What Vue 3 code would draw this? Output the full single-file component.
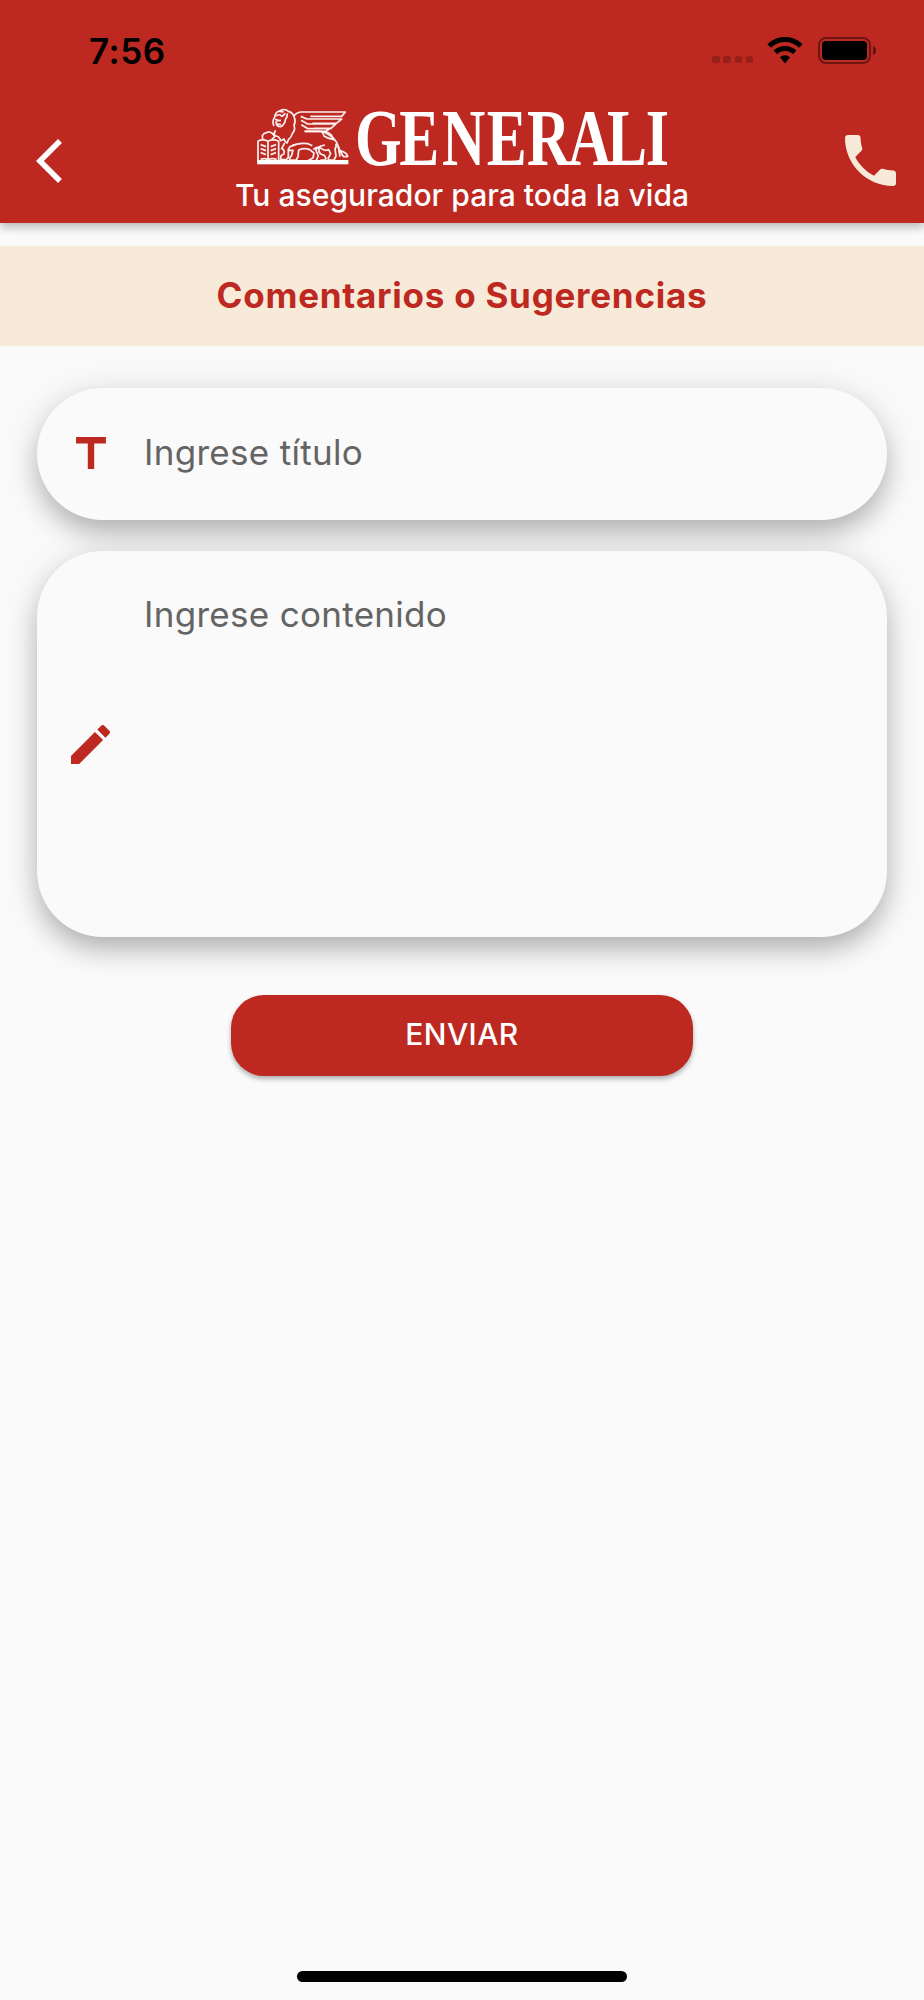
<template>
  <div class="screen">
    <header class="app-header">
      <div class="status-bar">
        <span class="time">7:56</span>
        <div class="status-icons">
          <div class="signal">
            <i v-for="n in 4" :key="n"></i>
          </div>
          <svg class="wifi" viewBox="0 0 36 27">
            <path d="M.4 7.2a25 25 0 0 1 35.2 0L32 10.8a20 20 0 0 0-28 0z" />
            <path d="M6.6 13.6a16.4 16.4 0 0 1 22.8 0l-3.5 3.7a11.4 11.4 0 0 0-15.8 0z" />
            <path d="M13 20.2a7.4 7.4 0 0 1 10 0l-5 6.4z" />
          </svg>
          <svg class="battery" viewBox="0 0 59 28">
            <rect x="1" y="1" width="51" height="25" rx="7" fill="none" stroke="#000" stroke-opacity=".42" stroke-width="2" />
            <rect x="4" y="4" width="45" height="19" rx="4" />
            <path d="M55 9q3 1 3 4.500t-3 4.500z" fill-opacity=".5" />
          </svg>
        </div>
      </div>

      <div class="nav-bar">
        <button class="nav-btn back" aria-label="Volver">
          <svg viewBox="0 0 11.67 19.8">
            <path d="M11.67 1.77L9.9 0 0 9.900l9.900 9.900 1.770-1.770L3.540 9.900z" />
          </svg>
        </button>

        <div class="brand">
          <svg class="logo" viewBox="256 106 414 62">
            <g transform="translate(251 100) scale(.3333)">
              <g class="lion">
                <!-- book -->
                <path d="M24 188V124q14-8 30 0q16-8 32 0V180" />
                <path d="M54 126V176M32 178q12-5 22 1q12-6 26-1" />
                <path d="M32 134l16 6M32 146l16 6M32 158l16 6M78 134l-16 6M78 146l-16 6M78 158l-16 6" />
                <path d="M38 118l-1-11q4-8 13-9q8-5 16 2q8 2 8 10l-8 8" />
                <!-- head and mane -->
                <path d="M72 78q-7-14 2-26q1-15 14-19q17-8 27 1q14 3 18 18q5 12-1 24q5 14-5 25q-3 12-11 17l-5 11q-7-3-9-12l-10 5q-4-13-14-14l-9-5q8-5 6-12" />
                <path d="M79 48q9-8 16 1q7-3 11-9M75 58l8 2-5 7 3 9q10 8 17 0q8-7 8-17q7-9 6-19" />
                <path d="M81 72l12 2M84 62l9-1M88 34l13 2" />
                <!-- wing -->
                <path d="M132 47q8-10 20-11h134l-11 13H181" />
                <path d="M152 49l19 8h104l-16 13H187M153 61l20 11h84l-14 13h-51M154 74l20 12h65l-12 8h-64" />
                <path d="M165 94h48q20 4 35 19q16 13 18 35l4 22" />
                <path d="M216 96q16-3 28 9l7 14q-18-3-29-11q-3-9-6-12z" />
                <!-- tail -->
                <path d="M265 140q8 22 16 30h13M269 151q12 3 20 10l5 10" />
                <!-- legs -->
                <path d="M104 129l-9 17q10 3 7 15l-9 6-1 12h17l6-7V155q-2-8 5-15l12-6" />
                <path d="M116 151h13l-4 15-6 9v5h20l5-10 2-20q17-7 33-1l13 10-3 15-12 6v5h20l8-17-8-20q14-12 28-13" />
                <path d="M126 138q18-11 48-7l13 6M190 148q12-10 23-3q11 9 23 4l6 12-7 13v6h17l6-12-3-21q5-8 3-16M207 145q-2 12 5 17l11 4 5 9-3 5h-14" />
              </g>
              <rect x="22" y="180" width="273" height="13" fill="#fff" />
            </g>
            <text
              class="wordmark"
              transform="translate(0 164.500) scale(.74 1)"
              x="481 541 598.500 659 713.500 769 821.500 874"
            >GENERALI</text>
          </svg>
          <p class="slogan">Tu asegurador para toda la vida</p>
        </div>

        <button class="nav-btn phone" aria-label="Llamar">
          <svg viewBox="3 3 18 18">
            <path d="M6.620 10.790c1.440 2.830 3.760 5.140 6.590 6.590l2.200-2.200c.27-.27.67-.36 1.020-.24 1.120.37 2.330.57 3.570.57.55 0 1 .45 1 1V20c0 .55-.45 1-1 1-9.390 0-17-7.610-17-17 0-.55.45-1 1-1h3.500c.55 0 1 .45 1 1 0 1.250.2 2.450.57 3.570.11.35.03.74-.25 1.020l-2.200 2.200z" />
          </svg>
        </button>
      </div>
    </header>

    <h1 class="banner"><span>Comentarios o Sugerencias</span></h1>

    <main class="form">
      <div v-for="field in fields" :key="field.name" class="field" :class="field.name">
        <svg class="field-icon" :viewBox="field.viewBox">
          <path :d="field.icon" />
        </svg>
        <span class="hint">{{ field.hint }}</span>
      </div>
      <button class="submit"><span>ENVIAR</span></button>
    </main>

    <footer class="home-area">
      <div class="home-indicator"></div>
    </footer>
  </div>
</template>

<script setup>
const fields = [
  {
    name: 'titulo',
    hint: 'Ingrese título',
    viewBox: '5 4 14 15',
    icon: 'M5 4v3h5.500v12h3V7H19V4z',
  },
  {
    name: 'contenido',
    hint: 'Ingrese contenido',
    viewBox: '3 3 18 18',
    icon: 'M3 17.250V21h3.750L17.810 9.940l-3.750-3.750L3 17.250zM20.710 7.040c.39-.39.39-1.020 0-1.410l-2.340-2.340c-.39-.39-1.020-.39-1.410 0l-1.830 1.830 3.750 3.750 1.830-1.830z',
  },
]
</script>

<style>
body {
  background: #fafafa;
}
</style>

<style scoped>
.screen {
  display: flex;
  flex-direction: column;
  width: 924px;
  height: 2000px;
  overflow: hidden;
  background: #fafafa;
  font-family: Inter, "Liberation Sans", sans-serif;
}
button {
  border: none;
  padding: 0;
  background: none;
  font-family: inherit;
}
svg {
  display: block;
}
.app-header {
  height: 223px;
  flex-shrink: 0;
  background: #bd2820;
  box-shadow: 0 4px 9px rgba(0, 0, 0, 0.2), 0 2px 12px rgba(0, 0, 0, 0.12);
}
.status-bar {
  display: flex;
  justify-content: space-between;
  height: 98px;
  padding: 0 47px 0 89px;
  box-sizing: border-box;
}
.time {
  padding-top: 30px;
  font-size: 35px;
  line-height: 43px;
  font-weight: 600;
  letter-spacing: 0.5px;
}
.status-icons {
  display: flex;
  align-items: flex-start;
  padding-top: 37px;
}
.signal {
  display: flex;
  gap: 3.700px;
  padding-top: 19px;
  margin-right: 14px;
}
.signal i {
  width: 7.400px;
  height: 7.400px;
  border-radius: 2px;
  background: rgba(0, 0, 0, 0.2);
}
.wifi {
  width: 36px;
  height: 27px;
  margin-right: 15px;
}
.battery {
  width: 59px;
  height: 28px;
}
.nav-bar {
  display: flex;
  justify-content: space-between;
  height: 125px;
}
.nav-btn {
  display: flex;
  align-items: flex-start;
  width: 98px;
  height: 125px;
  box-sizing: border-box;
}
.back {
  padding: 41px 0 0 36px;
}
.back svg {
  width: 26px;
  height: 44px;
  fill: #fff;
}
.phone {
  padding: 37px 0 0 19px;
}
.phone svg {
  width: 51px;
  height: 51px;
  fill: #f8ead9;
}
.brand {
  display: flex;
  flex-direction: column;
  align-items: center;
  padding-top: 8px;
}
.logo {
  width: 414px;
  height: 62px;
  overflow: visible;
}
.lion {
  fill: none;
  stroke: #fff;
  stroke-opacity: 0.92;
  stroke-width: 5.200;
  stroke-linejoin: round;
}
.wordmark {
  font-family: "Liberation Serif", serif;
  font-weight: 700;
  font-size: 81px;
  fill: #fff;
}
.slogan {
  margin: 9px 0 0;
  color: #fff;
  font-size: 30px;
  line-height: 36px;
  font-weight: 550;
  letter-spacing: 0.05px;
  white-space: nowrap;
}
.banner {
  display: flex;
  align-items: center;
  justify-content: center;
  height: 100px;
  margin: 23px 0 0;
  padding-bottom: 2px;
  box-sizing: border-box;
  background: #f8ead9;
  color: #bd2820;
  font-size: 35px;
  font-weight: 700;
  letter-spacing: 0.75px;
  flex-shrink: 0;
}
.form {
  display: flex;
  flex-direction: column;
  align-items: center;
  padding-top: 42px;
}
.field {
  display: flex;
  align-items: center;
  width: 850px;
  box-sizing: border-box;
  border-radius: 66px;
  background: #fafafa;
  box-shadow: 0 14px 26px -3px rgba(0, 0, 0, 0.22), 0 7px 36px 2px rgba(0, 0, 0, 0.13);
}
.titulo {
  height: 132px;
  padding-left: 39px;
}
.titulo .field-icon {
  width: 30px;
  height: 32px;
  margin: 0 38px 2px 0;
}
.contenido {
  height: 386px;
  margin-top: 31px;
  padding-left: 34px;
}
.contenido .field-icon {
  width: 39px;
  height: 39px;
  margin-right: 34px;
}
.field-icon {
  fill: #bd2820;
}
.hint {
  color: #646464;
  font-size: 35px;
  line-height: 44px;
  letter-spacing: 0.3px;
}
.titulo .hint {
  margin-bottom: 5px;
}
.contenido .hint {
  align-self: flex-start;
  margin-top: 41px;
}
.submit {
  width: 462px;
  height: 81px;
  margin-top: 58px;
  padding-bottom: 3px;
  border-radius: 33px;
  background: #bd2820;
  color: #fff;
  font-size: 30px;
  font-weight: 550;
  letter-spacing: 0.4px;
  box-shadow: 0 3px 5px rgba(0, 0, 0, 0.3);
}
.home-area {
  display: flex;
  justify-content: center;
  margin-top: auto;
  padding-bottom: 18px;
}
.home-indicator {
  width: 330px;
  height: 11px;
  border-radius: 6px;
  background: #000;
}
</style>
